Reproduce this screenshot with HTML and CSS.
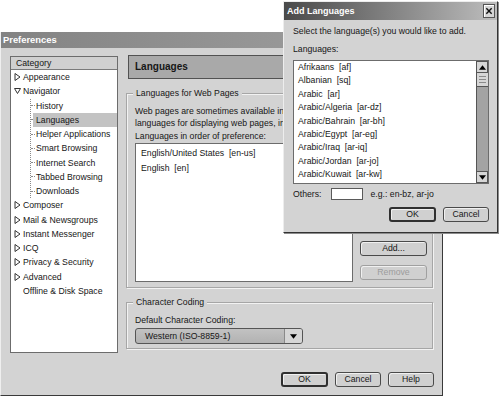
FILE: index.html
```html
<!DOCTYPE html>
<html lang="en">
<head>
    <meta charset="UTF-8">
    <title>Preferences - Languages</title>
    <link rel="stylesheet" href="styles.css">
</head>
<body>

    <!-- Preferences window -->
    <div class="prefs">
        <div class="titlebar">Preferences</div>
        <div class="prefs-body">

            <div class="category">
                <div class="cat-head">Category</div>
                <div class="tree">
                    <div class="row top"><svg class="twisty" viewBox="0 0 7 8"><polygon points="1,0.5 6,4 1,7.5"/></svg>Appearance</div>
                    <div class="row top"><svg class="twisty" viewBox="0 0 7 8"><polygon points="0.5,1.5 6.5,1.5 3.5,6.5"/></svg>Navigator</div>
                    <div class="children">
                        <div class="row child"><span>History</span></div>
                        <div class="row child sel"><span>Languages</span></div>
                        <div class="row child"><span>Helper Applications</span></div>
                        <div class="row child"><span>Smart Browsing</span></div>
                        <div class="row child"><span>Internet Search</span></div>
                        <div class="row child"><span>Tabbed Browsing</span></div>
                        <div class="row child"><span>Downloads</span></div>
                    </div>
                    <div class="row top"><svg class="twisty" viewBox="0 0 7 8"><polygon points="1,0.5 6,4 1,7.5"/></svg>Composer</div>
                    <div class="row top"><svg class="twisty" viewBox="0 0 7 8"><polygon points="1,0.5 6,4 1,7.5"/></svg>Mail &amp; Newsgroups</div>
                    <div class="row top"><svg class="twisty" viewBox="0 0 7 8"><polygon points="1,0.5 6,4 1,7.5"/></svg>Instant Messenger</div>
                    <div class="row top"><svg class="twisty" viewBox="0 0 7 8"><polygon points="1,0.5 6,4 1,7.5"/></svg>ICQ</div>
                    <div class="row top"><svg class="twisty" viewBox="0 0 7 8"><polygon points="1,0.5 6,4 1,7.5"/></svg>Privacy &amp; Security</div>
                    <div class="row top"><svg class="twisty" viewBox="0 0 7 8"><polygon points="1,0.5 6,4 1,7.5"/></svg>Advanced</div>
                    <div class="row top"><span class="twisty"></span>Offline &amp; Disk Space</div>
                </div>
            </div>

            <div class="main">
                <div class="page-head">Languages</div>

                <div class="group lang-group">
                    <div class="group-title">Languages for Web Pages</div>
                    <p class="intro">Web pages are sometimes available in more than one language. Choose the<br>languages for displaying web pages, in order of preference.</p>
                    <div class="label">Languages in order of preference:</div>
                    <div class="lang-row">
                        <div class="list pref-list">
                            <div class="item">English/United States  [en-us]</div>
                            <div class="item">English  [en]</div>
                        </div>
                        <div class="side-buttons">
                            <button class="btn">Add...</button>
                            <button class="btn" disabled>Remove</button>
                        </div>
                    </div>
                </div>

                <div class="group coding-group">
                    <div class="group-title">Character Coding</div>
                    <div class="label coding-label">Default Character Coding:</div>
                    <div class="dropdown">
                        <span class="dropdown-text">Western (ISO-8859-1)</span>
                        <span class="dropdown-arrow"><svg viewBox="0 0 8 5"><polygon points="0,0 8,0 4,5"/></svg></span>
                    </div>
                </div>
            </div>

        </div>
        <div class="footer">
            <button class="btn default">OK</button>
            <button class="btn">Cancel</button>
            <button class="btn">Help</button>
        </div>
    </div>

    <!-- Add Languages dialog (over the preferences window) -->
    <div class="dialog">
        <div class="dialog-title">
            <span>Add Languages</span>
            <span class="close"><svg viewBox="0 0 9 9"><path d="M1.5 1.5 L7.5 7.5 M7.5 1.5 L1.5 7.5"/></svg></span>
        </div>
        <div class="dialog-body">
            <div class="dlg-text">Select the language(s) you would like to add.</div>
            <div class="dlg-label">Languages:</div>
            <div class="list add-list">
                <div class="add-items">
                    <div class="item">Afrikaans  [af]</div>
                    <div class="item">Albanian  [sq]</div>
                    <div class="item">Arabic  [ar]</div>
                    <div class="item">Arabic/Algeria  [ar-dz]</div>
                    <div class="item">Arabic/Bahrain  [ar-bh]</div>
                    <div class="item">Arabic/Egypt  [ar-eg]</div>
                    <div class="item">Arabic/Iraq  [ar-iq]</div>
                    <div class="item">Arabic/Jordan  [ar-jo]</div>
                    <div class="item">Arabic/Kuwait  [ar-kw]</div>
                </div>
                <div class="scrollbar">
                    <div class="sb-btn"><svg viewBox="0 0 8 5"><polygon points="0,5 8,5 4,0"/></svg></div>
                    <div class="sb-thumb"><i></i><i></i><i></i></div>
                    <div class="sb-track"></div>
                    <div class="sb-btn"><svg viewBox="0 0 8 5"><polygon points="0,0 8,0 4,5"/></svg></div>
                </div>
            </div>
            <div class="others">
                <span>Others:</span>
                <span class="others-input"></span>
                <span class="others-hint">e.g.: en-bz, ar-jo</span>
            </div>
            <div class="dlg-buttons">
                <button class="btn default">OK</button>
                <button class="btn">Cancel</button>
            </div>
        </div>
    </div>

</body>
</html>
```

FILE: styles.css
```css
* {
    box-sizing: border-box;
}

body {
    margin: 0;
    width: 500px;
    height: 397px;
    overflow: hidden;
    position: relative;
    background: #fff;
    color: #161616;
    font-family: "Liberation Sans", Arial, sans-serif;
    font-size: 8.7px;
}

/* Preferences window */
.prefs {
    margin-top: 32px;
    width: 443px;
    height: 364px;
    background: #d3d3d3;
    border-left: 1px solid #efefef;
    border-right: 1px solid #3a3a3a;
    border-bottom: 1px solid #3a3a3a;
}

.titlebar {
    height: 16px;
    padding-left: 2px;
    line-height: 16px;
    font-size: 9.4px;
    font-weight: bold;
    color: #fff;
    background: linear-gradient(to right, #838383, #a3a3a3);
}

.prefs-body {
    display: flex;
    height: 305px;
    padding: 8px 0 0 9px;
}

/* Category tree */
.category {
    width: 108px;
    height: 297px;
    background: #fff;
    border: 1px solid #6c6c6c;
}

.cat-head {
    height: 13px;
    line-height: 12px;
    padding-left: 5px;
    background: #d0d0d0;
    border-bottom: 1px solid #7a7a7a;
}

.row {
    display: flex;
    align-items: center;
    height: 14.25px;
    white-space: nowrap;
}

.row.top {
    padding-left: 3px;
}

.twisty {
    width: 7px;
    height: 8px;
    margin-right: 2px;
    flex: none;
}

.twisty polygon {
    fill: #fff;
    stroke: #333;
    stroke-width: 1;
}

.children {
    margin-left: 19px;
    margin-bottom: 7px;
    border-left: 1px dotted #8a8a8a;
}

.children .row:last-child {
    margin-bottom: -7px;
}

.child::before {
    content: "";
    width: 4px;
    border-top: 1px dotted #8a8a8a;
    flex: none;
}

.child span {
    flex: 1;
    height: 14px;
    line-height: 14px;
    margin-left: -2px;
    padding-left: 3px;
}

.child.sel span {
    background: #c3c3c3;
}

/* Main page */
.main {
    width: 307px;
    margin-left: 8px;
}

.page-head {
    height: 24px;
    margin: -1px 0 0 2px;
    padding-left: 6px;
    line-height: 22px;
    font-size: 10px;
    font-weight: bold;
    background: #a9a9a9;
    border: 1px solid #525252;
}

.group {
    border: 1px solid #a6a6a6;
    box-shadow: inset 1px 1px 0 #f2f2f2, 1px 1px 0 #f2f2f2;
    padding: 0 5px 5px 8px;
}

.lang-group {
    margin-top: 14px;
}

.coding-group {
    margin-top: 14px;
    padding-bottom: 4px;
}

.group-title {
    width: fit-content;
    margin: -7px 0 0 -2px;
    padding: 0 3px;
    line-height: 12px;
    background: #d3d3d3;
}

.intro {
    margin: 6px 0 0;
    line-height: 12px;
    white-space: nowrap;
}

.label {
    margin-top: 1px;
    line-height: 12px;
}

.coding-label {
    margin-top: 6px;
}

.lang-row {
    display: flex;
    margin-top: 1px;
}

.list {
    background: #fff;
    border: 1px solid #6c6c6c;
}

.item {
    white-space: pre;
}

.pref-list {
    width: 218px;
    height: 139px;
    padding: 2px 0 0 5px;
}

.pref-list .item {
    line-height: 15px;
}

.side-buttons {
    display: flex;
    flex-direction: column;
    justify-content: flex-end;
    gap: 9px;
    width: 67px;
    margin-left: 7px;
    padding-bottom: 2px;
}

.btn {
    height: 15px;
    padding: 0;
    font: inherit;
    line-height: 13px;
    color: #161616;
    background: #d0d0d0;
    border: 1px solid #4a4a4a;
    border-radius: 3px;
    box-shadow: inset 1px 1px 0 #f0f0f0;
}

.btn.default {
    border: 2px solid #303030;
    line-height: 11px;
}

.btn:disabled {
    color: #9c9c9c;
    border-color: #a0a0a0;
}

.dropdown {
    display: flex;
    width: 168px;
    height: 16px;
    margin-top: 2px;
    background: linear-gradient(#c2c2c2, #b2b2b2);
    border: 1px solid #555;
    border-radius: 3px;
    overflow: hidden;
}

.dropdown-text {
    flex: 1;
    padding-left: 9px;
    line-height: 14px;
}

.dropdown-arrow {
    display: flex;
    align-items: center;
    justify-content: center;
    width: 18px;
    background: #d6d6d6;
    border-left: 1px solid #8a8a8a;
}

.dropdown-arrow svg,
.sb-btn svg {
    width: 7px;
    height: 5px;
}

.footer {
    display: flex;
    justify-content: flex-end;
    gap: 7px;
    padding: 19px 8px 0 0;
}

.footer .btn {
    width: 46px;
}

.footer .btn.default {
    width: 47px;
}

/* Add Languages dialog */
.dialog {
    position: absolute;
    left: 283px;
    top: 1px;
    width: 215px;
    height: 232px;
    background: #d3d3d3;
    border: 1px solid;
    border-color: #ededed #333 #333 #ededed;
    box-shadow: 1px 1px 0 #8c8c8c;
}

.dialog-title {
    display: flex;
    align-items: center;
    justify-content: space-between;
    height: 18px;
    padding: 0 2px 0 3px;
    font-size: 9px;
    font-weight: bold;
    color: #fff;
    background: linear-gradient(to right, #4a4a4a, #8e8e8e 60%, #bdbdbd);
}

.close {
    display: flex;
    align-items: center;
    justify-content: center;
    width: 12px;
    height: 14px;
    background: #d6d6d6;
    border: 1px solid #555;
    box-shadow: inset 1px 1px 0 #fff;
}

.close svg {
    width: 8px;
    height: 8px;
}

.close path {
    stroke: #111;
    stroke-width: 1.6;
}

.dialog-body {
    padding: 0 8px 0 9px;
}

.dlg-text {
    margin-top: 5px;
    line-height: 12px;
}

.dlg-label {
    margin-top: 6px;
    line-height: 12px;
}

.add-list {
    display: flex;
    height: 124px;
    margin-top: 5px;
}

.add-items {
    flex: 1;
    padding-left: 4px;
    overflow: hidden;
}

.add-items .item {
    line-height: 13.4px;
}

.scrollbar {
    display: flex;
    flex-direction: column;
    width: 12px;
    border-left: 1px solid #555;
}

.sb-btn {
    display: flex;
    align-items: center;
    justify-content: center;
    height: 12px;
    background: #d6d6d6;
    border: 1px solid #555;
    border-left: none;
}

.sb-thumb {
    display: flex;
    flex-direction: column;
    justify-content: center;
    gap: 2px;
    height: 14px;
    padding: 0 2px;
    background: #d6d6d6;
    border-bottom: 1px solid #555;
}

.sb-thumb i {
    height: 1px;
    background: #8a8a8a;
}

.sb-track {
    flex: 1;
    background: #a3a3a3;
}

.others {
    display: flex;
    align-items: center;
    height: 12px;
    margin-top: 4px;
}

.others-input {
    width: 32px;
    height: 12px;
    margin-left: 9px;
    background: #fff;
    border: 1px solid #5a5a5a;
}

.others-hint {
    margin-left: 8px;
}

.dlg-buttons {
    display: flex;
    justify-content: flex-end;
    gap: 7px;
    margin-top: 7px;
}

.dlg-buttons .btn {
    width: 46px;
}

.dlg-buttons .btn.default {
    width: 47px;
}
```
